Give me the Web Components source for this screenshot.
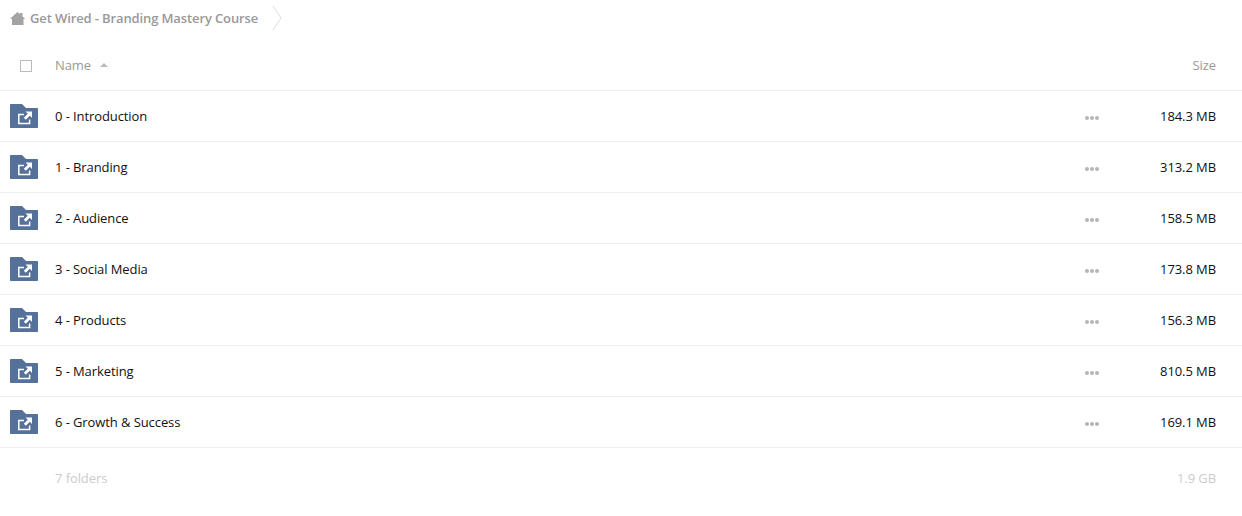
<!DOCTYPE html>
<html>
<head>
<meta charset="utf-8">
<title>Get Wired - Branding Mastery Course</title>
<style>
  html, body { margin: 0; padding: 0; background: #fff; }
  body { font: 13px "Open Sans", sans-serif; color: #000; letter-spacing: -0.09px; }
</style>
</head>
<body>
<file-browser>
  <bread-crumb>Get Wired - Branding Mastery Course</bread-crumb>
  <list-header></list-header>
  <folder-row name="0 - Introduction" size="184.3 MB"></folder-row>
  <folder-row name="1 - Branding" size="313.2 MB"></folder-row>
  <folder-row name="2 - Audience" size="158.5 MB"></folder-row>
  <folder-row name="3 - Social Media" size="173.8 MB"></folder-row>
  <folder-row name="4 - Products" size="156.3 MB"></folder-row>
  <folder-row name="5 - Marketing" size="810.5 MB"></folder-row>
  <folder-row name="6 - Growth &amp; Success" size="169.1 MB"></folder-row>
  <list-summary count="7 folders" total="1.9 GB"></list-summary>
</file-browser>

<script>
class FileBrowser extends HTMLElement {
  constructor() {
    super();
    this.attachShadow({ mode: 'open' }).innerHTML = `
      <style>
        :host { display: block; width: 1242px; }
      </style>
      <slot></slot>`;
  }
}

class BreadCrumb extends HTMLElement {
  constructor() {
    super();
    this.attachShadow({ mode: 'open' }).innerHTML = `
      <style>
        :host { display: flex; align-items: center; height: 40px; padding: 0 0 0 10px; color: #999; font-weight: 600; letter-spacing: -0.12px; }
        .home { width: 16px; height: 13px; margin: -3px 4px 0 0; }
        .text { margin-top: -4px; }
        .arrow { width: 10px; height: 26px; margin: -4px 0 0 14px; }
      </style>
      <svg class="home" viewBox="0 0 16 13"><path fill="#a3a3a3" d="M7.5 0 10 2.2V1H12.5V4.5L15.5 6.8H13.5V13H2V6.8H0Z"/></svg>
      <span class="text"><slot></slot></span>
      <svg class="arrow" viewBox="0 0 10 26"><path fill="none" stroke="#ddd" d="M1 1 9 13 1 25"/></svg>`;
  }
}

class ListHeader extends HTMLElement {
  constructor() {
    super();
    this.attachShadow({ mode: 'open' }).innerHTML = `
      <style>
        :host { display: flex; align-items: center; height: 50px; border-bottom: 1px solid #eee; color: #999; }
        .check { width: 10px; height: 10px; border: 1px solid #bbb; margin: 1px 0 0 20px; }
        .name { margin-left: 23px; display: flex; align-items: center; }
        .sort { width: 0; height: 0; margin-left: 9px; border: 4px solid transparent; border-top: 0; border-bottom: 4px solid #bbb; }
        .size { margin-left: auto; padding-right: 26px; }
      </style>
      <div class="check"></div>
      <div class="name">Name<span class="sort"></span></div>
      <div class="size">Size</div>`;
  }
}

const rowTemplate = document.createElement('template');
rowTemplate.innerHTML = `
  <style>
    :host { display: flex; align-items: center; height: 50px; border-bottom: 1px solid #eee; }
    svg { width: 28px; height: 24px; margin: 0 17px 0 10px; flex: none; }
    .name { flex: 1; color: #111; }
    .more { display: flex; gap: 1px; margin: 3px 0 0 0; }
    .more i { width: 4px; height: 4px; border-radius: 50%; background: #b5b5b5; }
    .size { width: 143px; padding-right: 26px; box-sizing: border-box; text-align: right; color: #111; }
  </style>
  <svg viewBox="0 0 28 24">
    <path fill="#557099" d="M0 1C0 .4.4 0 1 0H12L16 4H27C27.6 4 28 4.4 28 5V23C28 23.6 27.6 24 27 24H1C.4 24 0 23.6 0 23Z"/>
    <path fill="none" stroke="#fff" stroke-width="1.5" d="M14 10.5H8.8V19.4H19.6V15.5"/>
    <path fill="#fff" d="M15.5 7.5H22V14L19.8 11.8 15.8 15.8 13.8 13.8 17.8 9.8Z"/>
  </svg>
  <div class="name"></div>
  <div class="more"><i></i><i></i><i></i></div>
  <div class="size"></div>`;

class FolderRow extends HTMLElement {
  constructor() {
    super();
    this.attachShadow({ mode: 'open' }).appendChild(rowTemplate.content.cloneNode(true));
    this.shadowRoot.querySelector('.name').textContent = this.getAttribute('name');
    this.shadowRoot.querySelector('.size').textContent = this.getAttribute('size');
  }
}

class ListSummary extends HTMLElement {
  constructor() {
    super();
    this.attachShadow({ mode: 'open' }).innerHTML = `
      <style>
        :host { display: flex; align-items: center; justify-content: space-between; height: 60px; padding: 0 26px 0 55px; color: #ccc; }
      </style>
      <div>${this.getAttribute('count')}</div>
      <div>${this.getAttribute('total')}</div>`;
  }
}

window.customElements.define('file-browser', FileBrowser);
window.customElements.define('bread-crumb', BreadCrumb);
window.customElements.define('list-header', ListHeader);
window.customElements.define('folder-row', FolderRow);
window.customElements.define('list-summary', ListSummary);
</script>
</body>
</html>
